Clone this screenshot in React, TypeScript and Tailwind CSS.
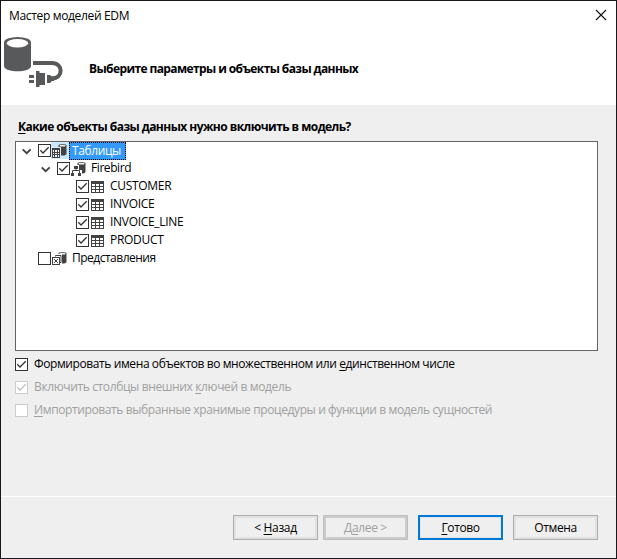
import React from "react";

type CheckProps = { checked?: boolean; disabled?: boolean };

function Check({ checked = true, disabled = false }: CheckProps) {
  const line = disabled ? "#cccccc" : "#333333";
  return (
    <svg width="13" height="13" viewBox="0 0 13 13" className="block shrink-0">
      <rect x="0.5" y="0.5" width="12" height="12" fill="#fff" stroke={line} />
      {checked && (
        <path d="M2.3 6.3 L5 9 L10.7 3.3" fill="none" stroke={disabled ? "#c0c0c0" : "#333"} strokeWidth="1.3" />
      )}
    </svg>
  );
}

function Chevron() {
  return (
    <svg width="10" height="7" viewBox="0 0 10 7" className="mt-[4px] block shrink-0">
      <path d="M0.700 1.300 L4.700 5.200 L8.700 1.300" fill="none" stroke="#404040" strokeWidth="1.8" />
    </svg>
  );
}

function MiniDb() {
  return (
    <>
      <path d="M6.500 1.500 V9.500 Q6.500 11.500 10.500 11.500 Q14.500 11.500 14.500 9.500 V1.500 Q14.500 0 10.500 0 Q6.500 0 6.500 1.500 Z" fill="#424242" />
      <ellipse cx="10.500" cy="1.700" rx="3.200" ry="0.900" fill="#f0f0f0" />
    </>
  );
}

function TablesIcon() {
  return (
    <svg width="16" height="16" viewBox="0 0 16 16" className="block shrink-0">
      <MiniDb />
      <rect x="-1" y="3" width="10" height="12" fill="#d5ebfc" />
      <rect x="0" y="4" width="8" height="10" fill="#424242" />
      <path d="M1 6h1v2h-1zM3 6h2v2h-2zM6 6h1v2h-1zM1 9h1v1h-1zM3 9h2v1h-2zM6 9h1v1h-1zM1 11h1v2h-1zM3 11h2v2h-2zM6 11h1v2h-1z" fill="#eef6fd" />
    </svg>
  );
}

function SchemaIcon() {
  return (
    <svg width="16" height="16" viewBox="0 0 16 16" className="block shrink-0">
      <MiniDb />
      <path d="M2 3h6v5h3v7H0v-7h2z" fill="#fff" />
      <path d="M3 4h4v3H3zM0 11h3v3H0zM7 11h3v3H7z" fill="#424242" />
      <path d="M5 7v2M1.500 11V8.500h7V11" fill="none" stroke="#424242" />
    </svg>
  );
}

function ViewsIcon() {
  return (
    <svg width="16" height="16" viewBox="0 0 16 16" className="block shrink-0">
      <MiniDb />
      <path d="M2 2h8v10H2z" fill="#fff" />
      <path d="M3.500 4.500V3.500h5.500V10.500h-1" fill="none" stroke="#424242" />
      <rect x="0.500" y="5.500" width="7" height="7" fill="#fff" stroke="#424242" />
      <path d="M2 7h1v1H2zM5 7h1v1H5zM2 10h1v1H2zM5 10h1v1H5zM3 8h2v2H3z" fill="#424242" />
    </svg>
  );
}

function TableIcon() {
  return (
    <svg width="13" height="12" viewBox="0 0 13 12" className="mt-px block shrink-0">
      <rect width="13" height="12" fill="#424242" />
      <path d="M1 3h3v2h-3zM5 3h3v2h-3zM9 3h3v2h-3zM1 6h3v2h-3zM5 6h3v2h-3zM9 6h3v2h-3zM1 9h3v2h-3zM5 9h3v2h-3zM9 9h3v2h-3z" fill="#fff" />
    </svg>
  );
}

function DatabasePlug() {
  return (
    <svg width="60" height="52" viewBox="0 0 60 52" className="block shrink-0">
      <path d="M0 6.500 V30 C0 37 27 37 27 30 V6.500 Z" fill="#58595b" />
      <ellipse cx="13.5" cy="6.5" rx="13.5" ry="5.500" fill="#58595b" />
      <ellipse cx="13.5" cy="7.2" rx="10.7" ry="4.2" fill="#fff" />
      <path d="M29 27 H48 C59.500 27 59.500 42.500 48 42.500" fill="none" stroke="#58595b" strokeWidth="4" />
      <path d="M25 39h5v3h-5zM25 44h5v3h-5zM32 35h3.500v2H41v12h-5.500v2H32zM43 39h3l2 1.500h2v4.500h-2L46 47h-3z" fill="#58595b" />
    </svg>
  );
}

const leaves = ["CUSTOMER", "INVOICE", "INVOICE_LINE", "PRODUCT"];

const U = ({ children }: { children: React.ReactNode }) => (
  <span className="underline decoration-1 underline-offset-2">{children}</span>
);

export default function App() {
  return (
    <div className="flex h-[559px] w-[617px] flex-col overflow-hidden border border-[#18181c] bg-[#efefef] font-['Open_Sans','Noto_Sans',sans-serif] text-[12px] leading-[18px] whitespace-nowrap text-black">
      <header className="flex h-[104px] shrink-0 flex-col bg-white">
        <div className="flex h-[35px] justify-between pt-[6px] pr-[9px] pl-[8px]">
          <span className="tracking-[-0.34px]">Мастер моделей EDM</span>
          <svg width="12" height="12" viewBox="0 0 12 12" className="mt-[2px]">
            <path d="M1 1 L11 11 M11 1 L1 11" stroke="#111" strokeWidth="1.1" />
          </svg>
        </div>
        <div className="flex pl-[3px]">
          <DatabasePlug />
          <h1 className="mt-[24px] ml-[25px] font-bold tracking-[-0.6px]">Выберите параметры и объекты базы данных</h1>
        </div>
      </header>

      <main className="flex h-[391px] shrink-0 flex-col px-[14px]">
        <h2 className="mt-[13px] ml-[3px] h-[23px] font-bold tracking-[-0.55px]"><U>К</U>акие объекты базы данных нужно включить в модель?</h2>
        <div className="flex h-[210px] w-[583px] shrink-0 flex-col border border-[#646464] bg-white">
          <div className="flex h-[18px] pt-[2px] pl-[6px]">
            <Chevron />
            <div className="ml-[6px] flex">
              <Check />
              <div className="-mt-[2px] flex h-[17px] bg-[#cce8ff] pt-[2px] pr-px pl-px"><TablesIcon /></div>
            </div>
            <span className="-mt-[2px] h-[18px] w-[57px] border border-dotted border-black bg-[#3399ff] pl-[2px] leading-[15px] tracking-[-0.4px] text-white">Таблицы</span>
          </div>
          <div className="flex h-[18px] pt-[2px] pl-[25px]">
            <Chevron />
            <span className="ml-[6px]"><Check /></span>
            <span className="ml-px"><SchemaIcon /></span>
            <span className="-mt-[3px] ml-[4px] tracking-[-0.42px]">Firebird</span>
          </div>
          {leaves.map((name) => (
            <div key={name} className="flex h-[18px] pt-[2px] pl-[60px]">
              <Check />
              <span className="ml-[2px]"><TableIcon /></span>
              <span className="-mt-[3px] ml-[6px] tracking-[-0.3px]">{name}</span>
            </div>
          ))}
          <div className="flex h-[18px] pt-[2px] pl-[22px]">
            <Check checked={false} />
            <span className="ml-px"><ViewsIcon /></span>
            <span className="-mt-[3px] ml-[4px] tracking-[-0.5px]">Представления</span>
          </div>
        </div>
        <div className="mt-[4px] flex flex-col gap-[5px]">
          <label className="flex items-center gap-[6px]">
            <Check />
            <span className="tracking-[-0.4px]">Формировать имена объектов во множественном или <U>е</U>динственном числе</span>
          </label>
          <label className="flex items-center gap-[6px] text-[#a0a0a0]">
            <Check disabled />
            <span className="tracking-[-0.37px]">Включить столбцы внешних <U>к</U>лючей в модель</span>
          </label>
          <label className="flex items-center gap-[6px] text-[#a0a0a0]">
            <Check disabled checked={false} />
            <span className="tracking-[-0.39px]"><U>И</U>мпортировать выбранные хранимые процедуры и функции в модель сущностей</span>
          </label>
        </div>
      </main>

      <footer className="flex flex-1 items-start justify-end border-t border-white pt-[18px] pr-[18px] tracking-[-0.35px]">
        <button className="h-[25px] w-[85px] border border-[#adadad] bg-[#efefef] tracking-[-0.35px] shadow-[inset_0_0_0_2px_#e1e1e1]">&lt; <U>Н</U>азад</button>
        <button className="ml-[5px] h-[25px] w-[85px] border border-[#bfbfbf] bg-[#efefef] tracking-[-0.35px] text-[#a0a0a0] shadow-[inset_0_0_0_2px_#cccccc]">Д<U>а</U>лее &gt;</button>
        <button className="ml-[10px] h-[25px] w-[85px] border-2 border-[#0078d7] bg-[#efefef] tracking-[-0.4px] shadow-[inset_0_0_0_1px_#e5e5e5]"><U>Г</U>отово</button>
        <button className="ml-[10px] h-[25px] w-[85px] border border-[#adadad] bg-[#efefef] tracking-[-0.4px] shadow-[inset_0_0_0_2px_#e1e1e1]">Отмена</button>
      </footer>
    </div>
  );
}
